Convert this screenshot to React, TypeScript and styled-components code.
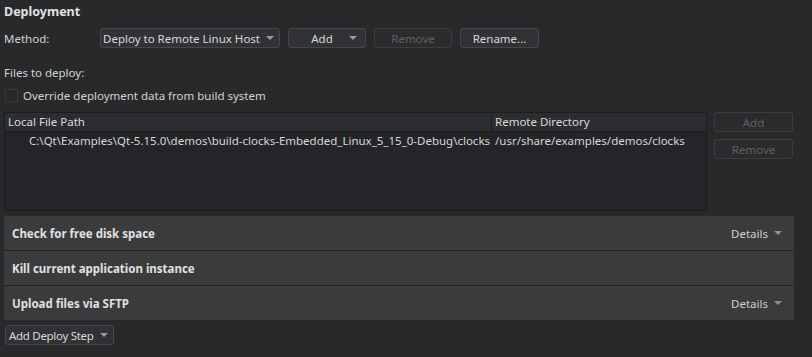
import React from "react";
import styled, { createGlobalStyle } from "styled-components";

const GlobalStyle = createGlobalStyle`
  html, body {
    margin: 0;
    padding: 0;
    background: #28292b;
  }
  body {
    font-family: "Noto Sans", "Open Sans", sans-serif;
    font-size: 11.5px;
    color: #d2d2d2;
  }
`;

const Page = styled.div`
  width: 812px;
  height: 357px;
  box-sizing: border-box;
  padding: 2px 18px 0 4px;
  display: flex;
  flex-direction: column;
  overflow: hidden;
  white-space: nowrap;
`;

const Title = styled.div`
  font-weight: bold;
  font-size: 12.5px;
  color: #e2e2e2;
  height: 20px;
  line-height: 20px;
`;

const MethodRow = styled.div`
  display: flex;
  align-items: center;
  gap: 8px;
  margin-top: 6px;
  height: 20px;
`;

const Label = styled.div`
  width: 88px;
`;

const Button = styled.button<{ $w: number; $disabled?: boolean }>`
  width: ${({ $w }) => $w}px;
  height: 20px;
  box-sizing: border-box;
  display: flex;
  align-items: center;
  justify-content: center;
  padding: 0 4px;
  font-family: inherit;
  font-size: 11.5px;
  white-space: nowrap;
  color: ${({ $disabled }) => ($disabled ? "#5f6062" : "#d8d8d8")};
  background: ${({ $disabled }) => ($disabled ? "#2a2b2d" : "#313235")};
  border: 1px solid ${({ $disabled }) => ($disabled ? "#3c3d40" : "#46474a")};
  border-radius: 3px;
`;

const ComboText = styled.span<{ $center?: boolean }>`
  flex: 1;
  text-align: ${({ $center }) => ($center ? "center" : "left")};
  padding-left: ${({ $center }) => ($center ? "8px" : "1px")};
`;

const Arrow = styled.span<{ $color?: string; $gap?: number; $right?: number }>`
  width: 0;
  height: 0;
  flex-shrink: 0;
  border-left: 4px solid transparent;
  border-right: 4px solid transparent;
  border-top: 4px solid ${({ $color }) => $color || "#9a9b9d"};
  margin-left: ${({ $gap }) => $gap ?? 6}px;
  margin-right: ${({ $right }) => $right ?? 4}px;
`;

const SubLabel = styled.div`
  margin-top: 17px;
  height: 16px;
  line-height: 16px;
`;

const CheckRow = styled.label`
  display: flex;
  align-items: center;
  gap: 5px;
  margin-top: 6px;
  height: 16px;
`;

const Box = styled.span`
  width: 13px;
  height: 13px;
  box-sizing: border-box;
  margin-left: 1px;
  background: #262729;
  border: 1px solid #38393c;
`;

const FilesArea = styled.div`
  display: flex;
  gap: 7px;
  margin-top: 9px;
`;

const Table = styled.div`
  width: 703px;
  height: 99px;
  box-sizing: border-box;
  background: #242528;
  border: 1px solid #1b1c1e;
`;

const HeaderRow = styled.div`
  display: grid;
  grid-template-columns: 486px 1fr;
  height: 18px;
  background: #2c2d30;
  border-bottom: 1px solid #1b1c1e;
`;

const HeaderCell = styled.div<{ $divider?: boolean }>`
  padding-left: 3px;
  line-height: 18px;
  border-left: ${({ $divider }) => ($divider ? "1px solid #1b1c1e" : "none")};
  color: #dadada;
`;

const DataRow = styled.div`
  display: grid;
  grid-template-columns: 486px 1fr;
  height: 18px;
  line-height: 18px;
  color: #d6d6d6;
`;

const Cell = styled.div<{ $indent?: number }>`
  padding-left: ${({ $indent }) => $indent ?? 4}px;
  overflow: hidden;
`;

const SideButtons = styled.div`
  display: flex;
  flex-direction: column;
  gap: 7px;
`;

const Steps = styled.div`
  margin-top: 5px;
  width: 790px;
  display: flex;
  flex-direction: column;
  gap: 1px;
  background: #242527;
`;

const Step = styled.div`
  height: 34px;
  background: #3a3b3d;
  display: flex;
  align-items: center;
  justify-content: space-between;
  padding: 0 8px;
`;

const StepTitle = styled.div`
  font-weight: bold;
  color: #e0e0e0;
`;

const Details = styled.div`
  display: flex;
  align-items: center;
  color: #cfcfcf;
`;

const Footer = styled.div`
  margin-top: 5px;
  padding-left: 1px;
  display: flex;
`;

const FooterButton = styled(Button)`
  width: auto;
  min-width: ${({ $w }) => $w}px;
  justify-content: space-between;
  padding: 0 3px 0 3px;
  letter-spacing: -0.3px;
`;

const steps = [
  { title: "Check for free disk space", details: true },
  { title: "Kill current application instance", details: false },
  { title: "Upload files via SFTP", details: true },
];

export default function App() {
  return (
    <>
      <GlobalStyle />
      <Page>
        <Title>Deployment</Title>
        <MethodRow>
          <Label>Method:</Label>
          <Button $w={180}>
            <ComboText>Deploy to Remote Linux Host</ComboText>
            <Arrow />
          </Button>
          <Button $w={78}>
            <ComboText $center>Add</ComboText>
            <Arrow />
          </Button>
          <Button $w={78} $disabled>Remove</Button>
          <Button $w={79}>Rename...</Button>
        </MethodRow>

        <SubLabel>Files to deploy:</SubLabel>
        <CheckRow>
          <Box />
          <span>Override deployment data from build system</span>
        </CheckRow>

        <FilesArea>
          <Table>
            <HeaderRow>
              <HeaderCell>Local File Path</HeaderCell>
              <HeaderCell $divider>Remote Directory</HeaderCell>
            </HeaderRow>
            <DataRow>
              <Cell $indent={24}>
                C:\Qt\Examples\Qt-5.15.0\demos\build-clocks-Embedded_Linux_5_15_0-Debug\clocks
              </Cell>
              <Cell>/usr/share/examples/demos/clocks</Cell>
            </DataRow>
          </Table>
          <SideButtons>
            <Button $w={79} $disabled>Add</Button>
            <Button $w={79} $disabled>Remove</Button>
          </SideButtons>
        </FilesArea>

        <Steps>
          {steps.map((s) => (
            <Step key={s.title}>
              <StepTitle>{s.title}</StepTitle>
              {s.details && (
                <Details>
                  Details
                  <Arrow $color="#8e8f91" />
                </Details>
              )}
            </Step>
          ))}
        </Steps>

        <Footer>
          <FooterButton $w={98}>
            Add Deploy Step
            <Arrow $gap={6} $right={2} />
          </FooterButton>
        </Footer>
      </Page>
    </>
  );
}
